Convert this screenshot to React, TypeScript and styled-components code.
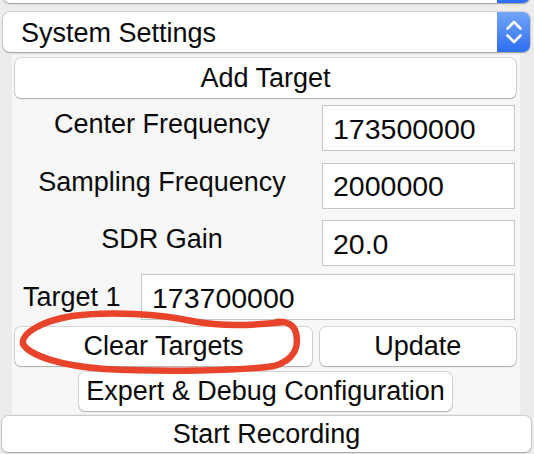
import React from "react";
import styled, { createGlobalStyle } from "styled-components";

const Global = createGlobalStyle`
  html, body { margin: 0; padding: 0; background: #ececec; }
  body { font-family: "Liberation Sans", Arial, sans-serif; overflow: hidden; }
  * { box-sizing: border-box; }
`;

const Page = styled.div`
  position: relative;
  width: 534px;
  height: 454px;
  overflow: hidden;
  background: #ececec;
  display: flex;
  flex-direction: column;
  font-family: "Liberation Sans", Arial, sans-serif;
  font-size: 27px;
  color: #0a0a0a;
`;

const Combo = styled.div<{ $clipped?: boolean }>`
  flex: none;
  margin: ${(p) => (p.$clipped ? "-37px 4px 0 3px" : "9px 4px 0 3px")};
  height: 40px;
  display: flex;
  align-items: stretch;
  background: #fff;
  border-radius: 7px;
  box-shadow: 0 0 0 1px rgba(0, 0, 0, 0.1), 0 1px 1.5px rgba(0, 0, 0, 0.25);
  overflow: hidden;
`;

const ComboText = styled.div`
  flex: 1;
  display: flex;
  align-items: center;
  padding-left: 18px;
  padding-top: 2px;
`;

const ComboArrow = styled.div`
  width: 33px;
  display: flex;
  align-items: center;
  justify-content: center;
  background: linear-gradient(#72a5f8, #2c6ef2);
`;

const Panel = styled.div`
  flex: none;
  margin: 3px 14px 0 12px;
  padding: 3px 4px 3px 3px;
  background: #f7f7f7;
  display: flex;
  flex-direction: column;
`;

const Button = styled.div<{ $h?: number }>`
  height: ${(p) => p.$h ?? 40}px;
  display: flex;
  align-items: center;
  justify-content: center;
  background: #fff;
  border-radius: 6px;
  box-shadow: 0 0 0 1px rgba(0, 0, 0, 0.13), 0 1px 1.5px rgba(0, 0, 0, 0.2);
  white-space: nowrap;
`;

const FieldGrid = styled.div`
  margin-top: 7px;
  padding-right: 1px;
  display: grid;
  grid-template-columns: 1fr 193px;
  column-gap: 13px;
  row-gap: 11.5px;
`;

const FieldLabel = styled.div`
  display: flex;
  align-items: center;
  justify-content: center;
  padding-bottom: 7px;
  white-space: nowrap;
`;

const Field = styled.input`
  height: 46px;
  width: 100%;
  border: 1px solid #c6c6c6;
  border-radius: 0;
  background: #fff;
  padding: 2px 0 0 10px;
  font-family: "Liberation Sans", Arial, sans-serif;
  font-size: 28.5px;
  color: #0a0a0a;
  outline: none;
`;

const TargetRow = styled.div`
  margin-top: 8px;
  padding-right: 1px;
  display: flex;
  align-items: center;
`;

const TargetLabel = styled.div`
  padding-left: 8px;
  white-space: nowrap;
  flex: 1;
`;

const TargetField = styled(Field)`
  width: 374px;
  flex: none;
`;

const ButtonRow = styled.div`
  margin-top: 7px;
  display: grid;
  grid-template-columns: 297px 1fr;
  column-gap: 7.5px;
`;

const CenterButton = styled(Button)`
  margin-top: 6px;
  align-self: center;
  width: 373px;
`;

const BottomButton = styled(Button)`
  flex: none;
  margin: 2px 3px 0 2px;
`;

const Annotation = styled.svg`
  position: absolute;
  left: 0;
  top: 0;
  pointer-events: none;
`;

const Chevrons = () => (
  <svg width="33" height="40" viewBox="0 0 33 40">
    <path
      d="M10.5 16.5 L17 10 L23.5 16.5 M10.5 23.5 L17 30 L23.5 23.5"
      fill="none"
      stroke="#fff"
      strokeWidth="2.6"
      strokeLinecap="round"
      strokeLinejoin="round"
    />
  </svg>
);

export default function App() {
  return (
    <Page>
      <Global />
      <Combo $clipped>
        <ComboText />
        <ComboArrow />
      </Combo>
      <Combo>
        <ComboText>System Settings</ComboText>
        <ComboArrow>
          <Chevrons />
        </ComboArrow>
      </Combo>
      <Panel>
        <Button>Add Target</Button>
        <FieldGrid>
          <FieldLabel>Center Frequency</FieldLabel>
          <Field readOnly value="173500000" />
          <FieldLabel>Sampling Frequency</FieldLabel>
          <Field readOnly value="2000000" />
          <FieldLabel>SDR Gain</FieldLabel>
          <Field readOnly value="20.0" />
        </FieldGrid>
        <TargetRow>
          <TargetLabel>Target 1</TargetLabel>
          <TargetField readOnly value="173700000" />
        </TargetRow>
        <ButtonRow>
          <Button $h={39}>Clear Targets</Button>
          <Button $h={39}>Update</Button>
        </ButtonRow>
        <CenterButton $h={39}>Expert &amp; Debug Configuration</CenterButton>
      </Panel>
      <BottomButton $h={36}>Start Recording</BottomButton>
      <Annotation width="534" height="454" viewBox="0 0 534 454">
        <path
          d="M277 322 C287 321 294 325 296 333 C299 346 295 360 274 366 C240 371 160 372 105 369 C62 366 30 356 23 344 C21 333 42 321 72 316 C110 311 160 314 192 321 C218 326 250 326 284 322"
          fill="none"
          stroke="#e8432b"
          strokeWidth="6.5"
          strokeLinecap="round"
          strokeLinejoin="round"
        />
      </Annotation>
    </Page>
  );
}
